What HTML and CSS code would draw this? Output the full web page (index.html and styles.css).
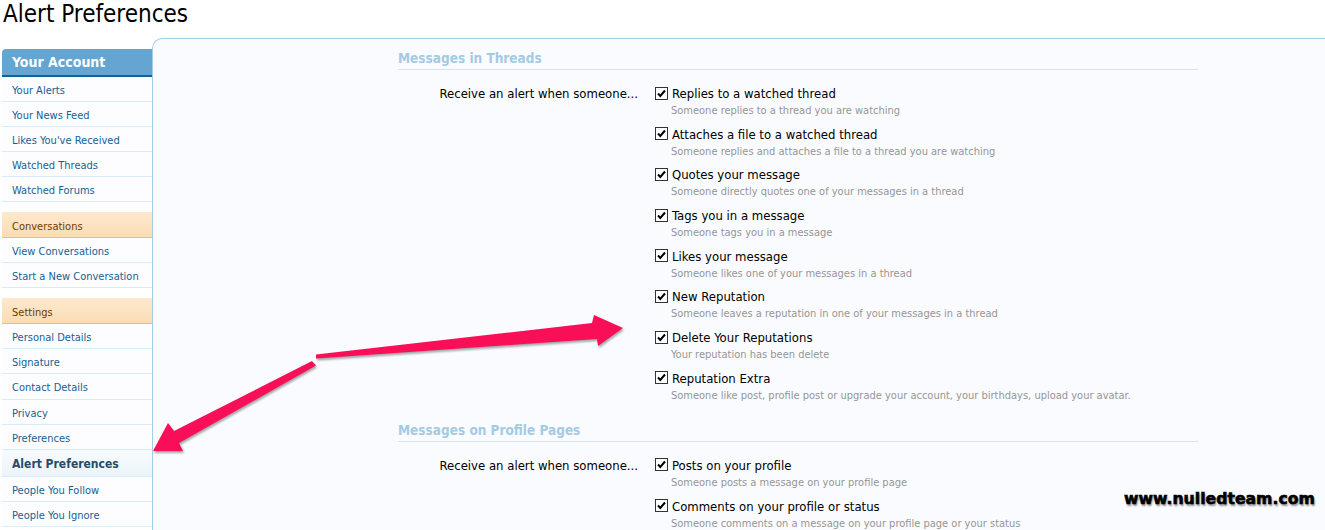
FILE: index.html
```html
<!DOCTYPE html>
<html lang="en">
<head>
<meta charset="utf-8">
<title>Alert Preferences</title>
<link rel="stylesheet" href="styles.css">
</head>
<body>
<h1 class="title">Alert Preferences</h1>
<div class="layout">
  <nav class="sidebar">
    <div class="group">
      <h3 class="group-head primary">Your Account</h3>
      <ul class="links">
        <li class="link">Your Alerts</li>
        <li class="link">Your News Feed</li>
        <li class="link">Likes You've Received</li>
        <li class="link">Watched Threads</li>
        <li class="link">Watched Forums</li>
      </ul>
    </div>
    <div class="group">
      <h3 class="group-head secondary">Conversations</h3>
      <ul class="links">
        <li class="link">View Conversations</li>
        <li class="link">Start a New Conversation</li>
      </ul>
    </div>
    <div class="group settings">
      <h3 class="group-head secondary">Settings</h3>
      <ul class="links">
        <li class="link">Personal Details</li>
        <li class="link">Signature</li>
        <li class="link">Contact Details</li>
        <li class="link">Privacy</li>
        <li class="link">Preferences</li>
        <li class="link selected">Alert Preferences</li>
        <li class="link">People You Follow</li>
        <li class="link">People You Ignore</li>
      </ul>
    </div>
  </nav>
  <main class="panel">
    <section class="block">
      <h2 class="block-title">Messages in Threads</h2>
      <div class="row">
        <div class="row-label">Receive an alert when someone...</div>
        <ul class="options">
          <li class="option"><div class="opt-line"><svg class="check" viewBox="0 0 13 13"><rect x="0.5" y="0.5" width="12" height="12" fill="#fff" stroke="#333"/><path d="M3 6.5 L5.3 9 L10 3.5" fill="none" stroke="#000" stroke-width="2"/></svg>Replies to a watched thread</div><p class="hint">Someone replies to a thread you are watching</p></li>
          <li class="option"><div class="opt-line"><svg class="check" viewBox="0 0 13 13"><rect x="0.5" y="0.5" width="12" height="12" fill="#fff" stroke="#333"/><path d="M3 6.5 L5.3 9 L10 3.5" fill="none" stroke="#000" stroke-width="2"/></svg>Attaches a file to a watched thread</div><p class="hint">Someone replies and attaches a file to a thread you are watching</p></li>
          <li class="option"><div class="opt-line"><svg class="check" viewBox="0 0 13 13"><rect x="0.5" y="0.5" width="12" height="12" fill="#fff" stroke="#333"/><path d="M3 6.5 L5.3 9 L10 3.5" fill="none" stroke="#000" stroke-width="2"/></svg>Quotes your message</div><p class="hint">Someone directly quotes one of your messages in a thread</p></li>
          <li class="option"><div class="opt-line"><svg class="check" viewBox="0 0 13 13"><rect x="0.5" y="0.5" width="12" height="12" fill="#fff" stroke="#333"/><path d="M3 6.5 L5.3 9 L10 3.5" fill="none" stroke="#000" stroke-width="2"/></svg>Tags you in a message</div><p class="hint">Someone tags you in a message</p></li>
          <li class="option"><div class="opt-line"><svg class="check" viewBox="0 0 13 13"><rect x="0.5" y="0.5" width="12" height="12" fill="#fff" stroke="#333"/><path d="M3 6.5 L5.3 9 L10 3.5" fill="none" stroke="#000" stroke-width="2"/></svg>Likes your message</div><p class="hint">Someone likes one of your messages in a thread</p></li>
          <li class="option"><div class="opt-line"><svg class="check" viewBox="0 0 13 13"><rect x="0.5" y="0.5" width="12" height="12" fill="#fff" stroke="#333"/><path d="M3 6.5 L5.3 9 L10 3.5" fill="none" stroke="#000" stroke-width="2"/></svg>New Reputation</div><p class="hint">Someone leaves a reputation in one of your messages in a thread</p></li>
          <li class="option"><div class="opt-line"><svg class="check" viewBox="0 0 13 13"><rect x="0.5" y="0.5" width="12" height="12" fill="#fff" stroke="#333"/><path d="M3 6.5 L5.3 9 L10 3.5" fill="none" stroke="#000" stroke-width="2"/></svg>Delete Your Reputations</div><p class="hint">Your reputation has been delete</p></li>
          <li class="option"><div class="opt-line"><svg class="check" viewBox="0 0 13 13"><rect x="0.5" y="0.5" width="12" height="12" fill="#fff" stroke="#333"/><path d="M3 6.5 L5.3 9 L10 3.5" fill="none" stroke="#000" stroke-width="2"/></svg>Reputation Extra</div><p class="hint">Someone like post, profile post or upgrade your account, your birthdays, upload your avatar.</p></li>
        </ul>
      </div>
    </section>
    <section class="block">
      <h2 class="block-title">Messages on Profile Pages</h2>
      <div class="row">
        <div class="row-label">Receive an alert when someone...</div>
        <ul class="options">
          <li class="option"><div class="opt-line"><svg class="check" viewBox="0 0 13 13"><rect x="0.5" y="0.5" width="12" height="12" fill="#fff" stroke="#333"/><path d="M3 6.5 L5.3 9 L10 3.5" fill="none" stroke="#000" stroke-width="2"/></svg>Posts on your profile</div><p class="hint">Someone posts a message on your profile page</p></li>
          <li class="option"><div class="opt-line"><svg class="check" viewBox="0 0 13 13"><rect x="0.5" y="0.5" width="12" height="12" fill="#fff" stroke="#333"/><path d="M3 6.5 L5.3 9 L10 3.5" fill="none" stroke="#000" stroke-width="2"/></svg>Comments on your profile or status</div><p class="hint">Someone comments on a message on your profile page or your status</p></li>
        </ul>
      </div>
    </section>
  </main>
</div>
<svg class="arrows" viewBox="0 0 1325 530" width="1325" height="530">
  <polygon points="316,354.5 592,323 594,315 623,328 598,346 597,339 316,358.5" fill="#f90f57"/>
  <polygon points="312,361 174,431 168,423 153,451 183,451 179,443 316,365.5" fill="#f90f57"/>
</svg>
<div class="watermark">www.nulledteam.com</div>
</body>
</html>
```

FILE: styles.css
```css
* { box-sizing: border-box; }
html, body { margin: 0; padding: 0; }
body {
  width: 1325px;
  height: 530px;
  overflow: hidden;
  background: #fff;
  font-family: "DejaVu Sans Condensed", "DejaVu Sans", sans-serif;
  font-stretch: condensed;
  color: #000;
  position: relative;
}
.title {
  margin: 0;
  padding: 0 0 0 3px;
  height: 38px;
  font-size: 24px;
  line-height: 28px;
  font-weight: normal;
  color: #000;
}
.layout {
  display: flex;
  align-items: flex-start;
}
.sidebar {
  width: 150px;
  margin-left: 2px;
  margin-top: 11px;
  flex: none;
}
.group { margin-bottom: 10px; }
.group-head {
  margin: 0;
  padding-left: 10px;
  font-weight: normal;
}
.group-head.primary {
  height: 28px;
  line-height: 26px;
  background: #65a5d1;
  border-bottom: 2px solid #176093;
  border-radius: 4px 0 0 0;
  color: #fff;
  font-size: 14px;
  font-weight: bold;
}
.group-head.secondary {
  height: 26px;
  line-height: 25px;
  padding-top: 2px;
  background: linear-gradient(#fde9cd, #fbdcb4);
  border-bottom: 1px solid #f9bc6d;
  color: #6c3c00;
  font-size: 11px;
}
.links { list-style: none; margin: 0; padding: 0; }
.link {
  height: 25px;
  line-height: 21px;
  padding: 3px 0 0 10px;
  background: #fdfdff;
  border-bottom: 1px solid #d7edfc;
  color: #176093;
  font-size: 11px;
}
.settings .link { height: 25.2px; }
.link.selected,
.settings .link.selected {
  height: 27px;
  line-height: 24px;
  padding-top: 2.5px;
  background: linear-gradient(#f7fbfe, #ecf4fa);
  color: #274b6a;
  font-size: 12px;
  font-weight: bold;
}
.panel {
  flex: 1;
  min-height: 492px;
  background: #fafbfe;
  border-top: 1px solid #a5cee9;
  border-left: 1px solid #a5cee9;
  border-radius: 10px 0 0 0;
  padding: 9px 0 0 245px;
}
.block { width: 800px; margin-bottom: 17px; }
.block-title {
  margin: 0;
  font-size: 13.5px;
  line-height: 19px;
  font-weight: bold;
  color: #a5cae4;
  padding: 1px 0 1px;
  border-bottom: 1px solid #d7e5f1;
}
.row {
  display: flex;
  margin-top: 15px;
}
.row-label {
  width: 240px;
  flex: none;
  text-align: right;
  font-size: 13px;
  line-height: 18px;
}
.options {
  list-style: none;
  margin: 0 0 0 17px;
  padding: 0;
}
.option { margin-bottom: 7.7px; }
.option:last-child { margin-bottom: 0; }
.opt-line {
  display: flex;
  align-items: center;
  font-size: 13px;
  line-height: 18px;
  height: 18px;
}
.check {
  width: 13px;
  height: 13px;
  margin-right: 4px;
  flex: none;
  position: relative;
  top: -1px;
}
.hint {
  margin: 0 0 0 16px;
  font-size: 11px;
  line-height: 15px;
  color: #969696;
}
.arrows {
  position: absolute;
  left: 0;
  top: 0;
  pointer-events: none;
  filter: drop-shadow(1px 2px 1px rgba(0,0,0,0.35));
}
.watermark {
  position: absolute;
  left: 1124px;
  top: 489px;
  font-family: "DejaVu Sans", sans-serif;
  font-stretch: normal;
  font-weight: bold;
  font-size: 15.7px;
  letter-spacing: 0;
  color: #000;
  text-shadow: 1px 2px 2px rgba(0,0,0,0.45);
  -webkit-text-stroke: 0.6px #000;
}
```
